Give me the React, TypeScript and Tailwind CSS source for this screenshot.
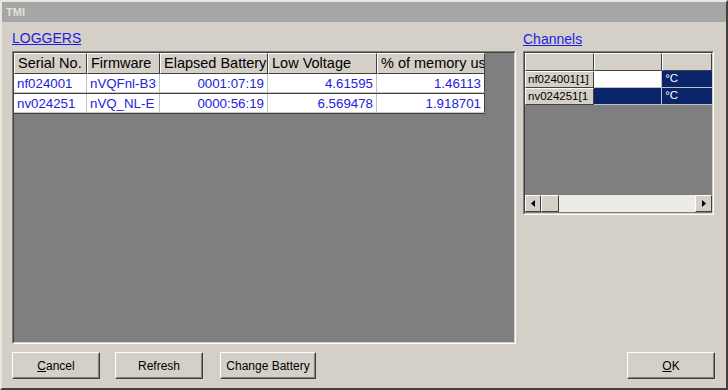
const font = { fontFamily: '"Liberation Sans", Arial, sans-serif' };

const cols = [
  { label: "Serial No.", w: "w-[73px]" },
  { label: "Firmware", w: "w-[73px]" },
  { label: "Elapsed Battery", w: "w-[108px]" },
  { label: "Low Voltage", w: "w-[109px]" },
  { label: "% of memory us", w: "w-[108px]" },
];

const rows = [
  ["nf024001", "nVQFnl-B3", "0001:07:19", "4.61595", "1.46113"],
  ["nv024251", "nVQ_NL-E", "0000:56:19", "6.569478", "1.918701"],
];

function Btn({ children, w }: { children: React.ReactNode; w: string }) {
  return (
    <button
      className={`${w} h-[27px] bg-[#d4d0c8] border border-t-white border-l-white border-r-[#404040] border-b-[#404040] text-[12px] text-black`}
    >
      <span className="flex h-full items-center justify-center border border-t-[#d4d0c8] border-l-[#d4d0c8] border-r-[#808080] border-b-[#808080]">
        {children}
      </span>
    </button>
  );
}

function Sunken({ children, className }: { children: React.ReactNode; className: string }) {
  return (
    <div className={`${className} border border-t-[#808080] border-l-[#808080] border-r-white border-b-white`}>
      <div className="w-full h-full border border-t-[#404040] border-l-[#404040] border-r-[#d4d0c8] border-b-[#d4d0c8] bg-[#807f80] overflow-hidden">
        {children}
      </div>
    </div>
  );
}

export default function App() {
  return (
    <div
      style={font}
      className="w-[728px] h-[390px] bg-[#d4d0c8] border-2 border-t-[#e8e6e0] border-l-[#e8e6e0] border-r-[#404040] border-b-[#404040] flex flex-col overflow-hidden"
    >
      <div className="h-[20px] bg-[#a6a6a6] flex items-center pl-[4px]">
        <span className="text-[11px] font-bold text-[#e4e2dc]">TMI</span>
      </div>

      <div className="flex pl-[10px] pt-[6px]">
        <div className="flex flex-col">
          <a className="h-[23px] text-[14px] leading-[20px] text-[#1e1ee0] underline w-fit">LOGGERS</a>
          <Sunken className="w-[504px] h-[293px]">
            <div className="flex flex-col w-fit bg-[#404040]">
              <div className="flex h-[21px]">
                {cols.map((c) => (
                  <div
                    key={c.label}
                    className={`${c.w} bg-[#d4d0c8] border border-t-white border-l-white border-r-[#404040] border-b-[#404040] text-[14.5px] pl-[3px] leading-[18px] whitespace-nowrap overflow-hidden`}
                  >
                    {c.label}
                  </div>
                ))}
              </div>
              {rows.map((r, i) => (
                <div key={i} className="flex h-[20px] border-b border-[#404040]">
                  {r.map((v, j) => (
                    <div
                      key={j}
                      className={`${cols[j].w} bg-white border-r border-[#c0c0c0] border-b border-b-[#c8c8c8] text-[13.3px] leading-[19px] text-[#2222dd] whitespace-nowrap overflow-hidden px-[3px] ${j >= 2 ? "text-right" : ""} ${j === 4 ? "border-r-[#404040]" : ""}`}
                    >
                      {v}
                    </div>
                  ))}
                </div>
              ))}
            </div>
          </Sunken>
        </div>

        <div className="flex flex-col ml-[7px]">
          <a className="h-[23px] text-[14px] leading-[20px] pt-[1px] text-[#1e1ee0] underline w-fit">Channels</a>
          <Sunken className="w-[191px] h-[164px]">
            <div className="flex flex-col h-full">
              <div className="flex h-[18px]">
                {["w-[69px]", "w-[69px]", "w-[50px]"].map((w, k) => (
                  <div
                    key={k}
                    className={`${w} bg-[#d4d0c8] border border-t-white border-l-white border-r-[#404040] border-b-[#404040]`}
                  />
                ))}
              </div>
              {[
                ["nf024001[1]", false],
                ["nv024251[1", true],
              ].map(([name, sel]) => (
                <div key={name as string} className="flex h-[17px] text-[11.5px] leading-[15px]">
                  <div className="w-[69px] bg-[#d4d0c8] border border-t-white border-l-white border-r-[#404040] border-b-[#404040] pl-[2px] whitespace-nowrap overflow-hidden">
                    {name}
                  </div>
                  <div
                    className={`w-[69px] border-r border-b border-[#c0c0c0] ${sel ? "bg-[#0a246a]" : "bg-white"}`}
                  />
                  <div className="w-[50px] bg-[#0a246a] border-b border-[#c0c0c0] text-white pl-[3px]">°C</div>
                </div>
              ))}
              <div className="flex-1" />
              <div className="flex h-[17px] mb-[1px]">
                <div className="w-[16px] h-[17px] bg-[#d4d0c8] border border-t-white border-l-white border-r-[#404040] border-b-[#404040] flex items-center justify-center">
                  <svg width="4" height="7" viewBox="0 0 4 7">
                    <path d="M4 0 L0 3.5 L4 7 Z" fill="black" />
                  </svg>
                </div>
                <div className="w-[18px] h-[17px] bg-[#d4d0c8] border border-t-white border-l-white border-r-[#404040] border-b-[#404040]" />
                <div className="flex-1 bg-[#ecebe6]" />
                <div className="w-[17px] h-[17px] bg-[#d4d0c8] border border-t-white border-l-white border-r-[#404040] border-b-[#404040] flex items-center justify-center">
                  <svg width="4" height="7" viewBox="0 0 4 7">
                    <path d="M0 0 L4 3.5 L0 7 Z" fill="black" />
                  </svg>
                </div>
              </div>
            </div>
          </Sunken>
        </div>
      </div>

      <div className="flex pl-[10px] mt-[8px]">
        <Btn w="w-[88px]">
          <span>
            <span className="underline">C</span>ancel
          </span>
        </Btn>
        <div className="ml-[15px]">
          <Btn w="w-[88px]">Refresh</Btn>
        </div>
        <div className="ml-[17px]">
          <Btn w="w-[96px]">Change Battery</Btn>
        </div>
        <div className="ml-[311px]">
          <Btn w="w-[88px]">
            <span>
              <span className="underline">O</span>K
            </span>
          </Btn>
        </div>
      </div>
    </div>
  );
}
